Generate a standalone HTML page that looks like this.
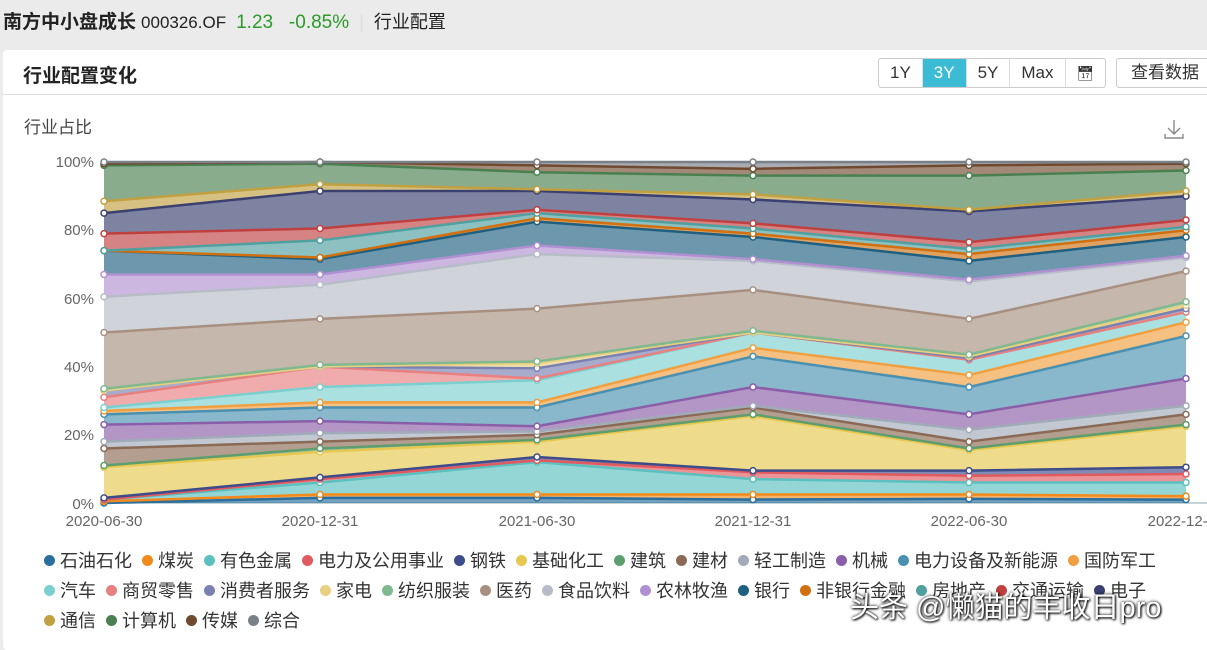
<!DOCTYPE html>
<html><head><meta charset="utf-8">
<style>
body{margin:0;width:1207px;height:638px;overflow:hidden;background:#ebebeb;font-family:"Liberation Sans","Noto Sans CJK SC",sans-serif;position:relative}
.top{position:absolute;top:7px;left:3px;font-size:18px;color:#222;white-space:nowrap}
.card{position:absolute;left:3px;top:50px;width:1210px;height:600px;background:#fff;border-radius:4px}
.hdr{position:absolute;left:0;top:0;right:0;height:44px;border-bottom:1px solid #ddd}
.btns{position:absolute;left:875px;top:8px;height:28px;display:flex;border:1px solid #ccc;border-radius:3px;font-size:17px}
.btns div{padding:0 11px;line-height:28px;border-right:1px solid #ddd;color:#333}
.legend{position:absolute;left:44px;font-size:18px;color:#333;white-space:nowrap}
.legend span{margin-right:10px}
.legend i{display:inline-block;width:11px;height:11px;border-radius:50%;margin-right:5px;vertical-align:1px}
</style></head><body>
<div class="top"><b style="font-size:19px">南方中小盘成长</b> <span style="font-size:17px">000326.OF</span> &nbsp;<span style="color:#2a9a2a;font-size:19px">1.23 &nbsp; -0.85%</span> &nbsp;<span style="color:#ddd">|</span>&nbsp; 行业配置</div>
<div class="card">
 <div class="hdr">
  <div style="position:absolute;left:20px;top:11px;font-size:19px;font-weight:bold;color:#222">行业配置变化</div>
  <div class="btns"><div>1Y</div><div style="background:#3bbcd4;color:#fff">3Y</div><div>5Y</div><div>Max</div><div style="border:none;font-size:14px">&#x1F4C5;&#xFE0E;</div></div>
  <div style="position:absolute;left:1113px;top:8px;height:28px;line-height:28px;border:1px solid #ccc;border-radius:3px;padding:0 14px;font-size:17px;color:#333;white-space:nowrap">查看数据</div>
 </div>
 <div style="position:absolute;left:21px;top:63px;font-size:17px;color:#444">行业占比</div>
 <svg style="position:absolute;left:1160px;top:68px" width="22" height="22"><path d="M11 2v13M5 10l6 6 6-6M2 16v4h18v-4" fill="none" stroke="#888" stroke-width="1.4"/></svg>
</div>
<svg id="ch" style="position:absolute;left:0;top:0" width="1207" height="638">
 <g font-size="15" fill="#666" text-anchor="end" font-family="Liberation Sans,sans-serif">
  <text x="94" y="167">100%</text><text x="94" y="235">80%</text>
  <text x="94" y="304">60%</text><text x="94" y="372">40%</text><text x="94" y="440">20%</text><text x="94" y="509">0%</text>
 </g>
 <g font-size="15" fill="#666" text-anchor="middle" font-family="Liberation Sans,sans-serif">
  <text x="104" y="526">2020-06-30</text><text x="320" y="526">2020-12-31</text><text x="537" y="526">2021-06-30</text><text x="753" y="526">2021-12-31</text><text x="969" y="526">2022-06-30</text><text x="1186" y="526">2022-12-31</text>
 </g>
 <g id="areas"></g>
</svg>
<div class="legend" style="top:547px"><span><i style="background:#2a6f9e"></i>石油石化</span><span><i style="background:#f28a1c"></i>煤炭</span><span><i style="background:#5bc0c0"></i>有色金属</span><span><i style="background:#e05a5f"></i>电力及公用事业</span><span><i style="background:#3d4c8a"></i>钢铁</span><span><i style="background:#e6c84f"></i>基础化工</span><span><i style="background:#5e9e6e"></i>建筑</span><span><i style="background:#8a6a55"></i>建材</span><span><i style="background:#a0aab8"></i>轻工制造</span><span><i style="background:#8a5ea8"></i>机械</span><span><i style="background:#4a90b0"></i>电力设备及新能源</span><span><i style="background:#f0a040"></i>国防军工</span></div>
<div class="legend" style="top:577px"><span><i style="background:#7ccfcf"></i>汽车</span><span><i style="background:#e88080"></i>商贸零售</span><span><i style="background:#7a80b0"></i>消费者服务</span><span><i style="background:#e8d080"></i>家电</span><span><i style="background:#80b890"></i>纺织服装</span><span><i style="background:#a89080"></i>医药</span><span><i style="background:#b8bcc8"></i>食品饮料</span><span><i style="background:#b090d0"></i>农林牧渔</span><span><i style="background:#1f5f80"></i>银行</span><span><i style="background:#d07010"></i>非银行金融</span><span><i style="background:#50a0a0"></i>房地产</span><span><i style="background:#c04040"></i>交通运输</span><span><i style="background:#3a4070"></i>电子</span></div>
<div class="legend" style="top:607px"><span><i style="background:#c0a040"></i>通信</span><span><i style="background:#4a8050"></i>计算机</span><span><i style="background:#704a30"></i>传媒</span><span><i style="background:#7a8088"></i>综合</span></div>
<div style="position:absolute;left:850px;top:584px;font-size:29px;color:#fff;text-shadow:0 0 3px #000,1px 1px 2px #000;white-space:nowrap">头条 @懒猫的丰收日pro</div>
<script>
var X=[104,320,537,753,969,1186];
var L=[
["#2a6f9e",[0,1.5,1.5,1,1.2,1]],["#f28a1c",[0.5,2.5,2.5,2.5,2.5,2]],["#5bc0c0",[1,6,12,7,6,6]],["#e05a5f",[1,7,12.5,9,8,8.5]],["#3d4c8a",[1.5,7.5,13.5,9.5,9.5,10.5]],["#e6c84f",[10.5,15,18,25.5,15.5,22.5]],["#5e9e6e",[11,16,18.5,26,16,23]],["#8a6a55",[16,18,20,28,18,26]],["#a0aab8",[18,20.5,21,28.5,21.5,28.5]],["#8a5ea8",[23,24,22.5,34,26,36.5]],["#4a90b0",[26,28,28,43,34,49]],["#f0a040",[27,29.5,29.5,45.5,37.5,53]],["#7ccfcf",[28,34,36,50,42,56]],["#e88080",[31,40,36.5,50,42,56]],["#7a80b0",[33,40,39.5,50,42.5,57]],["#e8d080",[33,40,41,50,43,58]],["#80b890",[33.5,40.5,41.5,50.5,43.5,59]],["#a89080",[50,54,57,62.5,54,68]],["#b8bcc8",[60.5,64,73,71,65,72]],["#b090d0",[67,67,75.5,71.5,65.5,72.5]],["#1f5f80",[74,71.5,82.5,78,71,78]],["#d07010",[74,72,83.5,79,73,80]],["#50a0a0",[74,77,85,80.5,74.5,81]],["#c04040",[79,80.5,86,82,76.5,83]],["#3a4070",[85,91.5,91.5,89,85.5,90]],["#c0a040",[88.5,93.5,92,90.5,86,91.5]],["#4a8050",[99,99.5,97,96,96,97.5]],["#704a30",[99.5,100,99,98,99,99.5]],["#7a8088",[100,100,100,100,100,100]]];
function Y(v){return 503-v*3.41}
var h='',prev=[0,0,0,0,0,0],lines='';
L.forEach(function(l){var c=l[0],t=l[1],p='';
for(var i=0;i<6;i++)p+=X[i]+','+Y(t[i])+' ';for(var i=5;i>=0;i--)p+=X[i]+','+Y(prev[i])+' ';
h+='<polygon points="'+p+'" fill="'+c+'" fill-opacity="0.65"/>';
var q='';for(var i=0;i<6;i++)q+=X[i]+','+Y(t[i])+' ';
lines+='<polyline points="'+q+'" fill="none" stroke="'+c+'" stroke-width="2.5"/>';
for(var i=0;i<6;i++)lines+='<circle cx="'+X[i]+'" cy="'+Y(t[i])+'" r="3" fill="#fff" stroke="'+c+'" stroke-width="1.5"/>';
prev=t;});
document.getElementById('areas').innerHTML='<line x1="104" y1="503" x2="1207" y2="503" stroke="#8aa" />'+h+lines;
</script>
</body></html>
